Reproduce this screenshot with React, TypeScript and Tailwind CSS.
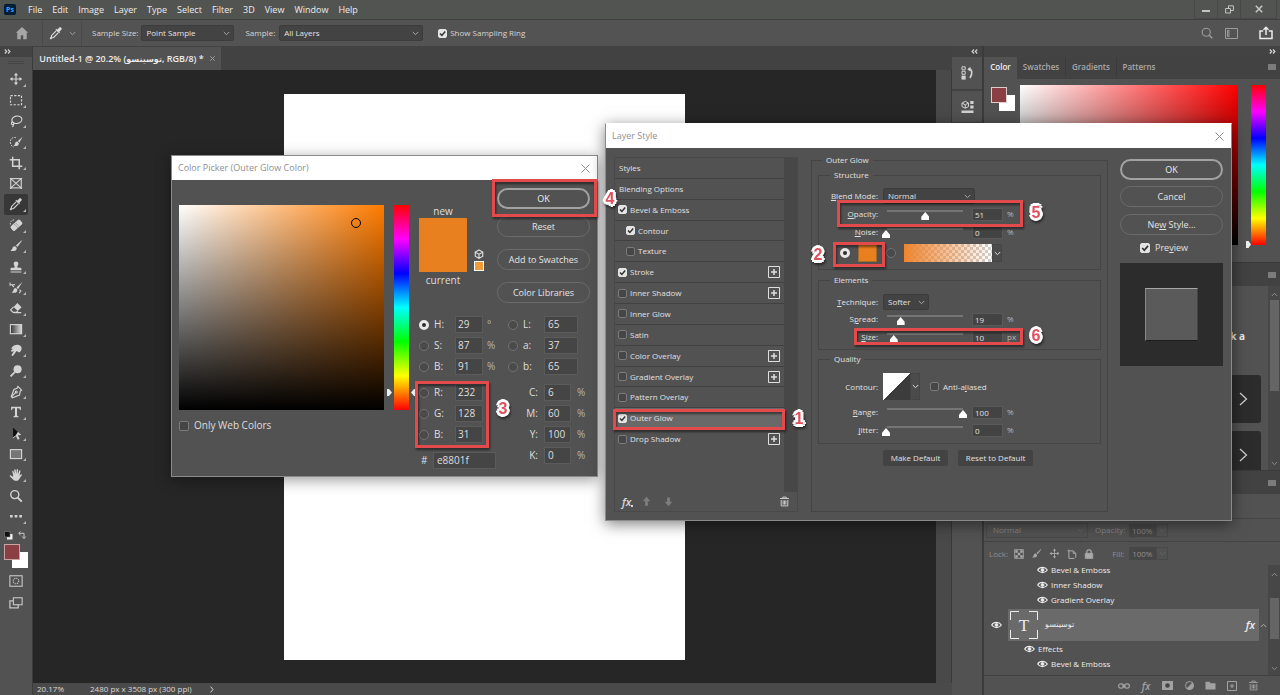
import React from "react";

type Kids = { children?: React.ReactNode };

/* ---------- small drawing helpers ---------- */

function Ico({ size = 16, children, className = "" }: { size?: number; className?: string } & Kids) {
  return (
    <svg
      width={size}
      height={size}
      viewBox="0 0 16 16"
      fill="none"
      stroke="currentColor"
      strokeWidth="1.3"
      aria-hidden="true"
      className={"shrink-0 " + className}
    >
      {children}
    </svg>
  );
}

const dropper = (
  <>
    <path d="M9.3 4.2 11.6 1.9c.7-.7 1.8-.6 2.4 0 .7.7.7 1.8 0 2.4l-2.2 2.3.8.8-1 1-4.2-4.2 1-1z" fill="currentColor" stroke="none" />
    <path d="M8.2 5.6 3 10.8l-.4 1.9-1 1.2.6.6 1.2-1 1.9-.4 5.2-5.2" />
  </>
);
const brush = (
  <>
    <path d="M14.4 1.4 8 7.4l1.6 1.8 5.2-7.2z" fill="currentColor" stroke="none" />
    <path d="M7.2 8.2c-1.6-.2-2.8.6-3.2 2.2-.3 1.2-.9 2.2-2.4 2.9 2.6 1 7.4.8 7.3-3.1z" fill="currentColor" stroke="none" />
  </>
);
const moveShape = (
  <>
    <path d="M8 2.5v11M2.5 8h11" />
    <path d="M8 .8 10.4 4H5.6zM8 15.2 5.6 12h4.8zM.8 8 4 5.6v4.8zM15.2 8 12 10.4V5.6z" fill="currentColor" stroke="none" />
  </>
);

const tools: { name: string; art: React.ReactNode; corner?: boolean; active?: boolean }[] = [
  { name: "Move", corner: true, art: moveShape },
  { name: "Rectangular Marquee", corner: true, art: <rect x="1.7" y="3" width="12.6" height="10.4" strokeDasharray="2.6 1.6" /> },
  {
    name: "Lasso",
    corner: true,
    art: (
      <>
        <ellipse cx="9" cy="6.6" rx="5.8" ry="4.2" transform="rotate(-12 9 6.6)" />
        <circle cx="4.2" cy="10.6" r="1.5" />
        <path d="M4.6 12c.6 1 .2 2.2-.8 2.8" />
      </>
    ),
  },
  {
    name: "Quick Selection",
    corner: true,
    art: (
      <>
        <path d="M8 3.2C5 1.600 1.500 4 1.500 7.800c0 3 1.400 5.400 4 5.900" strokeDasharray="2 1.300" strokeWidth="1.100" />
        <path d="M15.600 2 10.200 6.800l1.600 2zM9.600 7.400c-1.800 0-2.500 1.100-2.700 2.500-.2 1.100-.8 1.900-1.900 2.400 2.400.9 6.400.5 6.200-3z" fill="currentColor" stroke="none" />
      </>
    ),
  },
  { name: "Crop", corner: true, art: <path d="M4.200.8v10.800h11M.8 4.200h10.900v11" strokeWidth="1.700" /> },
  { name: "Frame", art: <><rect x="2" y="3" width="12" height="10.600" /><path d="m2 3 12 10.600M14 3 2 13.600" /><path d="M1 2.800h2M13 2.800h2M1 13.800h2M13 13.800h2" /></> },
  { name: "Eyedropper", corner: true, active: true, art: dropper },
  {
    name: "Spot Healing Brush",
    corner: true,
    art: (
      <>
        <rect x="1.500" y="4.900" width="14" height="6.800" rx="1.800" transform="rotate(-42 8.500 8.300)" fill="currentColor" stroke="none" />
        <path d="M6.400 7.300 9.600 10.800M8 6l3.200 3.400" stroke="#535353" strokeWidth=".9" strokeDasharray="1 .9" />
        <path d="M1.500 7.500C1 4.200 3.600 1.600 7 2.200" strokeDasharray="1.800 1.200" strokeWidth="1" />
      </>
    ),
  },
  { name: "Brush", corner: true, art: brush },
  {
    name: "Clone Stamp",
    corner: true,
    art: <path d="M8 1.600a2.700 2.700 0 0 1 2.300 4.100c-.7 1.200-.8 2.200-.6 3.100H13c.9 0 1.200.6 1.200 1.400v1.600H1.800v-1.600c0-.8.3-1.400 1.200-1.400h3.300c.2-.9.1-1.900-.6-3.100A2.700 2.700 0 0 1 8 1.600zM1.800 13h12.400v1.400H1.800z" fill="currentColor" stroke="none" />,
  },
  {
    name: "History Brush",
    corner: true,
    art: (
      <>
        <path d="M15.200 1 8.600 7.300l1.700 2zM8 8c-1.700 0-2.500 1-2.800 2.400-.3 1.100-1 2.100-2.200 2.700 2.700.9 6.800.5 6.600-3.100z" fill="currentColor" stroke="none" />
        <path d="M1 4.200h6M1.200 1.800v3.600M3 4.200 5.800 7M12 9.800l1.600 1.600-2 2.400" strokeWidth="1.200" />
      </>
    ),
  },
  {
    name: "Eraser",
    corner: true,
    art: (
      <>
        <path d="M9.600 2.400 14.400 7 10 11.400 5.200 6.800z" fill="currentColor" stroke="none" />
        <path d="M5.200 6.800 1.800 10.200 4.800 13H8.400L10 11.400M6 13.300h8" />
      </>
    ),
  },
  {
    name: "Gradient",
    corner: true,
    art: (
      <>
        <defs>
          <linearGradient id="toolGradient">
            <stop offset="0" stopColor="#333" />
            <stop offset="1" stopColor="#ddd" />
          </linearGradient>
        </defs>
        <rect x="1.600" y="3" width="12.800" height="10.400" fill="url(#toolGradient)" />
      </>
    ),
  },
  {
    name: "Smudge",
    corner: true,
    art: <path d="M3 5.400C4.600 2.600 7.400 1.700 10.400 2c2.600.3 4 1.800 4 4.200 0 2.200-1.100 3.800-3 4.600L8.800 9 4.800 14.400c-.8.9-2.200 0-1.700-1.100L5.600 9 3.400 10c-1 .2-1.500-.9-.8-1.600L5 6.300l-1.500.5c-.8 0-.9-.8-.5-1.400z" fill="currentColor" stroke="none" />,
  },
  {
    name: "Dodge",
    corner: true,
    art: (
      <>
        <circle cx="9.800" cy="6" r="4.600" fill="currentColor" stroke="none" />
        <path d="M6.600 9.200 1.800 14.200" strokeWidth="1.900" />
      </>
    ),
  },
  {
    name: "Pen",
    corner: true,
    art: (
      <>
        <path d="m10.200 1.600 4.200 4.200-1.500 1.100-.9 4.500-8.200 3.200-1.200-1.200 3-8.300 3.700-1.400z" />
        <path d="m2.800 13.600 4.600-4.800" />
        <circle cx="8.300" cy="8" r="1.100" />
      </>
    ),
  },
  {
    name: "Type",
    corner: true,
    art: <path d="M2.400 2h11.200v3.600h-1.200c-.1-1.300-.5-1.800-1.700-1.800H9.200v8c0 .8.400 1 1.600 1.100V14H5.200v-1.100c1.200-.1 1.600-.3 1.600-1.100v-8H5.300c-1.200 0-1.600.5-1.700 1.800H2.400z" fill="currentColor" stroke="none" />,
  },
  {
    name: "Path Selection",
    corner: true,
    art: (
      <>
        <path d="M4.500 1 14 10.200l-4 .4 2.100 4-2.100 1-2-4.200-3.500 2.800z" fill="currentColor" stroke="none" />
        <path d="M4.500 1v12.200l3.200-2.600 2.600-3.900z" fill="#111" stroke="none" />
      </>
    ),
  },
  { name: "Rectangle", corner: true, art: <rect x="1.600" y="3" width="12.800" height="10.200" fill="#767576" /> },
  {
    name: "Hand",
    corner: true,
    art: <path d="M4.900 8.900 3.700 4.100c-.2-1 1.100-1.300 1.400-.4l1.200 3.400L6 2.200c0-1 1.400-1.100 1.600-.1l.7 4.700.5-5c.1-.9 1.500-.9 1.500.1l-.1 5.200 1.500-3.900c.4-.9 1.600-.5 1.400.4l-1.200 5.200 1.500-1.500c.9-.7 1.800.2 1.200 1l-3.500 5c-.7.9-1.500 1.400-2.900 1.400-1.800 0-2.900-.5-3.900-1.800L.9 9.300C.4 8.500 1.400 7.800 2.100 8.400l1.900 1.700z" fill="currentColor" stroke="none" />,
  },
  {
    name: "Zoom",
    art: (
      <>
        <circle cx="6.600" cy="6.400" r="4.600" strokeWidth="1.600" />
        <path d="m10 9.800 4.600 4.600" strokeWidth="2.200" />
      </>
    ),
  },
  {
    name: "Edit Toolbar",
    corner: true,
    art: <path d="M1.200 6.800h3v3h-3zM6.500 6.800h3v3h-3zM11.800 6.800h3v3h-3z" fill="currentColor" stroke="none" />,
  },
];

function Chevron({ className = "" }: { className?: string }) {
  return (
    <svg width="7" height="5" viewBox="0 0 7 5" fill="none" stroke="currentColor" aria-hidden="true" className={"shrink-0 " + className}>
      <path d="M.8 1 3.500 3.700 6.200 1" />
    </svg>
  );
}

function DoubleChevron({ flip = false }: { flip?: boolean }) {
  return (
    <svg width="7" height="5" viewBox="0 0 7 5" fill="none" stroke="currentColor" strokeWidth="1.200" aria-hidden="true" className={flip ? "rotate-180" : ""}>
      <path d="M.8.5 2.700 2.500.8 4.500M4 .5l1.900 2L4 4.500" />
    </svg>
  );
}

function Burger() {
  return (
    <button aria-label="Panel menu" className="flex h-3 w-4 items-center justify-center text-[#b4b4b4]">
      <svg width="8" height="6" viewBox="0 0 8 6" stroke="currentColor" aria-hidden="true">
        <path d="M0 1h8M0 3h8M0 5h8" strokeWidth="1" />
      </svg>
    </button>
  );
}

function Trash({ size = 12 }: { size?: number }) {
  return (
    <Ico size={size}>
      <path d="M1.500 3.600h13M5.500 3.400V1.600h5v1.800M3.200 5.800v8.600h9.600V5.800M6 6.500v6M8 6.500v6M10 6.500v6" />
    </Ico>
  );
}

function Fx({ size = "text-[12px]" }: { size?: string }) {
  return <span className={"font-['Open_Sans',sans-serif] leading-none font-semibold italic " + size}>fx</span>;
}

/* ---------- form controls ---------- */

function Tick({ id, checked = false, big = false }: { id: string; checked?: boolean; big?: boolean }) {
  return (
    <span className={big ? "relative flex size-[10px] shrink-0" : "relative flex size-[9px] shrink-0"}>
      <input
        id={id}
        type="checkbox"
        defaultChecked={checked}
        className="peer size-full appearance-none rounded-[2px] border border-[#7c7b7c] bg-[#474647] checked:border-[#e4e4e4] checked:bg-[#e4e4e4]"
      />
      <svg viewBox="0 0 10 10" className="pointer-events-none absolute inset-0 hidden size-full peer-checked:block" fill="none" stroke="#333" strokeWidth="1.700" aria-hidden="true">
        <path d="M2.200 5 4.300 7.200 8 2.900" />
      </svg>
    </span>
  );
}

function Radio({ name, label, checked = false }: { name: string; label: string; checked?: boolean }) {
  return (
    <input
      type="radio"
      name={name}
      aria-label={label}
      defaultChecked={checked}
      className="size-[10px] shrink-0 appearance-none rounded-full border border-[#737273] bg-[#4b4a4b] checked:border-[3px] checked:border-[#e8e8e8] checked:bg-[#2c2c2c]"
    />
  );
}

function Select({ label, value, className }: { label: string; value: string; className: string }) {
  return (
    <span className={"relative flex h-4 items-center " + className}>
      <select aria-label={label} defaultValue={value} className="size-full appearance-none rounded-[2px] border border-[#3d3c3d] bg-[#444344] pr-3 pl-1 text-[#e2e2e2]">
        <option>{value}</option>
      </select>
      <Chevron className="pointer-events-none absolute right-1 text-[#a8a8a8]" />
    </span>
  );
}

function Underlined({ text, at }: { text: string; at: number }) {
  return (
    <>
      {text.slice(0, at)}
      <span className="underline">{text[at]}</span>
      {text.slice(at + 1)}
    </>
  );
}

/* ---------- application frame ---------- */

function MenuBar() {
  const items = ["File", "Edit", "Image", "Layer", "Type", "Select", "Filter", "3D", "View", "Window", "Help"];
  return (
    <header className="flex h-[19px] shrink-0 items-center bg-[#525452] pr-[3px] pl-1 text-[9px] text-[#ececec]">
      <span className="mr-3 flex h-[11px] w-3 items-center justify-center rounded-[2px] bg-[#001e36] text-[7px] leading-none font-bold text-[#31a8ff]">Ps</span>
      <nav className="flex flex-1 items-center gap-[10px]">
        {items.map((m) => (
          <button key={m}>{m}</button>
        ))}
      </nav>
      <div className="flex h-full text-[#c4c4c4]">
        <button aria-label="Minimize" className="flex w-6 items-center justify-center border-x border-b border-[#474847]">
          <svg width="8" height="8" viewBox="0 0 8 8"><path d="M0 5h8v2H0z" fill="currentColor" /></svg>
        </button>
        <button aria-label="Restore" className="flex w-[22px] items-center justify-center border-b border-[#474847]">
          <svg width="9" height="9" viewBox="0 0 9 9" fill="none" stroke="currentColor"><path d="M.6 3.500h4.900v4.500H.6zM3.500 3.400V.8h4.900v4.700H5.600" /></svg>
        </button>
        <button aria-label="Close" className="flex w-[37px] items-center justify-center border-x border-b border-[#474847]">
          <svg width="8" height="8" viewBox="0 0 8 8" stroke="currentColor" strokeWidth="1.600"><path d="m.8.8 6.400 6.400M7.200.8.8 7.200" /></svg>
        </button>
      </div>
    </header>
  );
}

function OptionsBar() {
  return (
    <div className="flex h-[27px] shrink-0 items-center border-t border-[#404040] bg-[#535353] text-[8px] text-[#d6d6d6]">
      <button aria-label="Home" className="flex w-[42px] justify-center pl-[2px] text-[#a6a6a6]">
        <Ico size={14}>
          <path d="M8 1 1 7.600h1.600V15h4v-4.500h2.800V15h4V7.600H15z" fill="currentColor" stroke="none" />
        </Ico>
      </button>
      <button aria-label="Eyedropper presets" className="flex h-full w-10 items-center justify-center gap-[6px] border-x border-[#4a4a4a] text-[#e0e0e0]">
        <Ico size={14}>{dropper}</Ico>
        <Chevron className="text-[#a0a0a0]" />
      </button>
      <span className="ml-[10px]">Sample Size:</span>
      <Select label="Sample Size" value="Point Sample" className="ml-[3px] w-[93px]" />
      <span className="ml-[11px]">Sample:</span>
      <Select label="Sample" value="All Layers" className="ml-1 w-[144px]" />
      <span className="ml-[15px] flex items-center gap-[3px]">
        <Tick id="ring" checked />
        <label htmlFor="ring">Show Sampling Ring</label>
      </span>
      <div className="ml-auto flex items-center gap-3 pr-[7px] text-[#9c9c9c]">
        <button aria-label="Search">
          <Ico size={12}><circle cx="7" cy="7" r="5.400" strokeWidth="1.500" /><path d="m11 11 4 4" strokeWidth="2" /></Ico>
        </button>
        <button aria-label="Workspace">
          <svg width="13" height="11" viewBox="0 0 13 11" fill="none" stroke="currentColor"><path d="M.5.5h12v10H.5z" /><path d="M2.500 2.500h1.500v6H2.500z" /></svg>
        </button>
        <button aria-label="Share" className="ml-[9px] text-[#ececec]">
          <svg width="14" height="14" viewBox="0 0 14 14" fill="none" stroke="currentColor" strokeWidth="1.500"><path d="M4.200 5H1v7.600h12V5H9.800M7 9V1.500M4.500 3.700 7 1.300l2.500 2.400" /></svg>
        </button>
      </div>
    </div>
  );
}

function ToolColumn() {
  return (
    <aside className="flex w-[33px] shrink-0 flex-col border-r border-[#3c3b3c] bg-[#535253]">
      <div className="flex h-[11px] shrink-0 items-center bg-[#434343] pl-1 text-[#d0d0d0]">
        <DoubleChevron />
      </div>
      <div className="mx-2 mt-1 h-[3px] shrink-0 border-y border-[#474647]" />
      <div className="mt-[5px] flex h-[458px] shrink-0 flex-col text-[#d4d4d4]">
        {tools.map((t) => (
          <button
            key={t.name}
            aria-label={t.name}
            className={
              t.active
                ? "relative ml-1 flex w-6 flex-1 items-center justify-center rounded-[2px] bg-[#383738]"
                : "relative ml-1 flex w-6 flex-1 items-center justify-center"
            }
          >
            <Ico size={14}>{t.art}</Ico>
            {t.corner && (
              <svg width="3" height="3" viewBox="0 0 3 3" className="absolute right-[2px] bottom-[3px]" aria-hidden="true">
                <path d="M3 0v3H0z" fill="#b8b8b8" />
              </svg>
            )}
          </button>
        ))}
      </div>
      <div className="mt-1 flex items-center gap-[5px] pl-1">
        <svg width="9" height="9" viewBox="0 0 9 9"><path d="M3 3h5.500v5.500H3z" fill="#eee" /><path d="M.5.5H6V6H.5z" fill="#111" stroke="#888" strokeWidth=".6" /></svg>
        <svg width="8" height="9" viewBox="0 0 8 9" fill="none" stroke="#c8c8c8"><path d="M1 2.300h5v4.500M2.500.5.700 2.300l1.800 1.800M4.200 5.500 6 7.700l1.700-2.200" /></svg>
      </div>
      <div className="mt-1 ml-1 grid h-6 w-6 grid-cols-6 grid-rows-6">
        <span className="col-[3/7] row-[3/7] bg-white" />
        <span className="col-[1/5] row-[1/5] border border-[#c9a5a6] bg-[#8a3f44]" />
      </div>
      <div className="mt-[6px] ml-1 flex w-6 flex-col items-center gap-2 text-[#c4c4c4]">
        <button aria-label="Quick Mask">
          <Ico size={14}><rect x="1" y="2" width="14" height="12" /><circle cx="8" cy="8" r="3.200" strokeDasharray="1.500 1" /></Ico>
        </button>
        <button aria-label="Screen Mode">
          <Ico size={14}><rect x="5" y="2" width="10" height="8" /><path d="M5 5.500H1V13.500h9.500V10" strokeWidth="1.500" /></Ico>
        </button>
      </div>
    </aside>
  );
}

function DocumentArea() {
  return (
    <main className="flex min-w-0 flex-1 flex-col bg-[#424242]">
      <div className="flex h-6 shrink-0 items-stretch">
        <div className="mt-px flex w-[188px] items-center justify-center gap-[6px] bg-[#535253] text-[9px] font-semibold whitespace-nowrap text-[#ececec]">
          <span>
            Untitled-1 @ 20.2% (<bdi className="font-['DejaVu_Sans',sans-serif] text-[8px]">توسینسو</bdi>, RGB/8) *
          </span>
          <button aria-label="Close document" className="text-[#a0a0a0]">
            <svg width="5" height="5" viewBox="0 0 5 5" stroke="currentColor"><path d="m.3.3 4.400 4.400M4.700.3.300 4.700" /></svg>
          </button>
        </div>
      </div>
      <div className="flex min-h-0 flex-1">
        <div className="flex min-w-0 flex-1 items-center justify-center overflow-hidden bg-[#272627]">
          <div className="h-[566px] w-[401px] shrink-0 bg-white" />
        </div>
        <div className="w-4 shrink-0 border-r border-[#3a393a] bg-[#4a494a]" />
      </div>
      <footer className="flex h-3 shrink-0 items-center bg-[#4b4a4b] text-[8px] leading-none text-[#d8d8d8]">
        <span className="ml-1 w-[53px]">20.17%</span>
        <span>2480 px x 3508 px (300 ppi)</span>
        <svg width="4" height="7" viewBox="0 0 4 7" fill="none" stroke="currentColor" className="ml-[18px]" aria-hidden="true"><path d="M.6.600 3 3.500.6 6.400" /></svg>
      </footer>
    </main>
  );
}

function IconDock() {
  return (
    <aside className="flex w-[32px] shrink-0 flex-col border-r-2 border-[#3c3b3c] bg-[#535253] text-[#d2d2d2]">
      <div className="flex h-[11px] items-center justify-end bg-[#434343] pr-1">
        <DoubleChevron flip />
      </div>
      <button aria-label="History" className="flex h-[34px] items-center justify-center border-b-2 border-[#434243]">
        <svg width="13" height="14" viewBox="0 0 13 14" fill="none" stroke="currentColor" aria-hidden="true">
          <path d="M1 .8h3.200v3H1zM1 5.300h3.200v3H1z" /><path d="M.5 9.600h4.200v4H.5z" fill="currentColor" stroke="none" /><path d="M7.500 2.500c3.500.5 4.600 4.500 1.500 9.500" strokeWidth="1.600" /><path d="M6.300 3.500 9.500.8v4.700z" fill="currentColor" stroke="none" />
        </svg>
      </button>
      <button aria-label="Libraries" className="flex h-[33px] items-center justify-center border-b-2 border-[#434243]">
        <svg width="13" height="14" viewBox="0 0 13 14" fill="none" stroke="currentColor" aria-hidden="true">
          <path d="M4.300 1.300 7.500 3v3.500L4.300 8.300 1 6.500V3zM1.200 3.200l3.100 1.600 3-1.600M4.300 4.800v3.200" /><path d="M9.300 1H12.500v3H9.300zM9.300 5.500H12.500v3H9.300zM.5 10.500h12v2.400H.5z" fill="currentColor" stroke="none" />
        </svg>
      </button>
    </aside>
  );
}

function Eye() {
  return (
    <svg width="11" height="8" viewBox="0 0 11 8" fill="none" stroke="#ececec" className="shrink-0" aria-hidden="true">
      <path d="M.7 4C2.800.6 8.200.6 10.300 4 8.200 7.400 2.800 7.400.700 4z" strokeWidth="1.200" />
      <circle cx="5.500" cy="4" r="1.400" fill="#ececec" />
    </svg>
  );
}

function EffectRow({ name, deep = true }: { name: string; deep?: boolean }) {
  return (
    <div className={deep ? "flex h-[15px] items-center gap-[3px] pl-[53px]" : "flex h-[15px] items-center gap-[3px] pl-[40px]"}>
      <Eye />
      <span>{name}</span>
    </div>
  );
}

function Scroll({ pad, thumb }: { pad: string; thumb: string }) {
  return (
    <div className={"flex w-3 shrink-0 flex-col items-center bg-[#484748] text-[#8c8c8c] " + pad}>
      <Chevron className="rotate-180" />
      <span className={"w-[9px] bg-[#666566] " + thumb} />
      <Chevron className="mt-auto" />
    </div>
  );
}

const hueBar = "bg-[linear-gradient(to_bottom,#f00,#f0f,#00f,#0ff,#0f0,#ff0,#f00)]";

function Panels() {
  return (
    <aside className="flex w-[296px] shrink-0 flex-col bg-[#535253] text-[8px] text-[#dcdcdc]">
      <div className="flex h-[11px] shrink-0 items-center justify-end bg-[#434343] pr-1">
        <DoubleChevron />
      </div>
      <div className="flex h-[22px] shrink-0 items-stretch bg-[#434243] pb-[2px] font-semibold text-[#a8a8a8]">
        <button className="-mb-[2px] w-[33px] bg-[#535253] pb-[2px] text-[#f0f0f0]">Color</button>
        <button className="w-[49px] border-r border-[#3b3a3b]">Swatches</button>
        <button className="w-[51px] border-r border-[#3b3a3b]">Gradients</button>
        <button className="w-[44px]">Patterns</button>
        <span className="ml-auto flex items-center"><Burger /></span>
      </div>
      <div className="flex h-[183px] shrink-0 pt-[6px] pl-[7px]">
        <div className="mt-[2px] grid h-6 w-6 grid-cols-6 grid-rows-6">
          <span className="col-[3/7] row-[3/7] bg-white" />
          <span className="col-[1/5] row-[1/5] border border-[#dcc] bg-[#8a3f44]" />
        </div>
        <div className="ml-[5px] h-40 w-[218px] bg-[linear-gradient(to_top,#000,transparent),linear-gradient(to_right,#fff,#f00)]" />
        <svg width="5" height="7" viewBox="0 0 5 7" className="mt-[156px] ml-2" aria-hidden="true"><path d="M0 0h2.500L5 3.500 2.500 7H0z" fill="#eee" /></svg>
        <div className={"h-40 w-[15px] " + hueBar} />
      </div>

      <div className="flex h-6 shrink-0 items-center justify-end border-t border-[#3b3a3b] bg-[#434243]"><Burger /></div>
      <div className="flex h-[184px] shrink-0 justify-end">
        <div className="flex flex-1 flex-col items-end overflow-hidden pr-[7px]">
          <p className="mt-[43px] mr-4 text-[10px] leading-[14px] font-bold text-[#ececec]">k a</p>
          {[0, 1].map((i) => (
            <button key={i} aria-label="Open card" className="mt-8 flex h-12 w-20 shrink-0 items-center justify-end rounded-[3px] bg-[#2d2c2d] pr-[13px] not-first-of-type:mt-2">
              <svg width="9" height="14" viewBox="0 0 9 14" fill="none" stroke="#d4d4d4" strokeWidth="1.200"><path d="m1 1 6.500 6L1 13" /></svg>
            </button>
          ))}
        </div>
        <Scroll pad="pt-[6px] pb-1" thumb="mt-[3px] h-[91px]" />
      </div>

      <div className="flex h-6 shrink-0 items-center justify-end border-t border-[#3b3a3b] bg-[#434243]"><Burger /></div>
      <div className="h-[25px] shrink-0 border-b border-[#454445]" />
      <div className="flex h-[23px] shrink-0 items-center border-b border-[#454445] pl-[2px] text-[#858485]">
        <span className="relative flex h-[15px] w-[102px] items-center">
          <select aria-label="Layer blend mode" defaultValue="Normal" className="size-full appearance-none border border-[#4a494a] pl-[6px] text-[#858485]"><option>Normal</option></select>
          <Chevron className="pointer-events-none absolute right-1 text-[#676667]" />
        </span>
        <label htmlFor="layerOpacity" className="ml-[7px] w-[34px]">Opacity:</label>
        <input id="layerOpacity" defaultValue="100%" className="h-[13px] w-[27px] bg-[#474647] pl-[3px] leading-[13px]" />
        <span className="flex h-[13px] w-3 items-center justify-center border border-[#4a494a]"><Chevron className="text-[#676667]" /></span>
      </div>
      <div className="flex h-[23px] shrink-0 items-center pl-[5px] text-[#8f8e8f]">
        <span>Lock:</span>
        <div className="ml-[6px] flex items-center gap-[7px] text-[#aaa9aa]">
          <Ico size={10}><path d="M1 1h14v14H1z" /><path d="M2 2h4v4H2zM10 2h4v4h-4zM6 6h4v4H6zM2 10h4v4H2zM10 10h4v4h-4z" fill="currentColor" stroke="none" /></Ico>
          <Ico size={11}>{brush}</Ico>
          <Ico size={11}>{moveShape}</Ico>
          <Ico size={10}><path d="M1 3h9l4 4v7M3 1v14h9M10 3v4h4" strokeWidth="1.600" /></Ico>
          <Ico size={10}><path d="M2 7h12v8H2z" fill="currentColor" /><path d="M4.500 7V4.500c0-4 7-4 7 0V7" strokeWidth="2" /></Ico>
        </div>
        <label htmlFor="layerFill" className="ml-[18px] w-[17px]">Fill:</label>
        <input id="layerFill" defaultValue="100%" className="h-[13px] w-[27px] bg-[#474647] pl-[3px] leading-[13px]" />
        <span className="flex h-[13px] w-3 items-center justify-center border border-[#4a494a]"><Chevron className="text-[#676667]" /></span>
      </div>

      <div className="flex min-h-0 flex-1 border-b border-[#424142]">
        <div className="min-w-0 flex-1 overflow-hidden text-[#ececec]">
          <div className="-mt-[3px]">
            <EffectRow name="Bevel &amp; Emboss" />
            <EffectRow name="Inner Shadow" />
            <EffectRow name="Gradient Overlay" />
          </div>
          <div className="mt-[2px] flex h-8 items-center">
            <span className="flex w-6 justify-center"><Eye /></span>
            <div className="flex h-full flex-1 items-center bg-[#6b6a6b] pl-[2px]">
              <span className="relative flex size-7 items-center justify-center font-['Liberation_Serif',serif] text-[17px] leading-none">
                <svg viewBox="0 0 28 28" className="absolute inset-0 size-full" fill="none" stroke="#eee" aria-hidden="true"><path d="M.5 9V.5H9M19 .5h8.500V9M27.500 19v8.500H19M9 27.500H.5V19" /></svg>
                T
              </span>
              <bdi className="ml-[7px] font-['DejaVu_Sans',sans-serif] text-[8px]">توسینسو</bdi>
              <span className="mr-1 ml-auto"><Fx size="text-[11px]" /></span>
            </div>
            <span className="flex w-[9px] justify-center"><Chevron className="rotate-180 text-[#aaa]" /></span>
          </div>
          <EffectRow name="Effects" deep={false} />
          <EffectRow name="Bevel &amp; Emboss" />
        </div>
        <Scroll pad="pt-[7px] pb-1" thumb="mt-[21px] h-[41px]" />
      </div>
      <div className="flex h-[19px] shrink-0 items-center justify-end pr-4 text-[#a2a1a2]">
        <button aria-label="Link layers" className="flex w-[22px] justify-center"><svg width="12" height="6" viewBox="0 0 12 6" fill="none" stroke="currentColor" strokeWidth="1.200"><rect x=".6" y=".8" width="5" height="4.400" rx="2.200" /><rect x="6.400" y=".8" width="5" height="4.400" rx="2.200" /><path d="M4 3h4" /></svg></button>
        <button aria-label="Layer effects" className="flex w-[22px] justify-center"><Fx size="text-[10px]" /></button>
        <button aria-label="Add mask" className="flex w-[21px] justify-center"><svg width="11" height="9" viewBox="0 0 11 9"><path d="M0 0h11v9H0z" fill="currentColor" /><circle cx="5.500" cy="4.500" r="2.300" fill="#444" /></svg></button>
        <button aria-label="Adjustment layer" className="flex w-[22px] justify-center"><svg width="9" height="9" viewBox="0 0 9 9"><circle cx="4.500" cy="4.500" r="4" fill="none" stroke="currentColor" /><path d="M7.500 1.500A4.200 4.200 0 0 1 1.500 7.500z" fill="currentColor" /></svg></button>
        <button aria-label="New group" className="flex w-[21px] justify-center"><svg width="11" height="9" viewBox="0 0 11 9"><path d="M.5.8h4l1 1.400h5V8.500H.5z" fill="currentColor" /></svg></button>
        <button aria-label="New layer" className="flex w-[22px] justify-center"><svg width="10" height="10" viewBox="0 0 10 10" fill="none" stroke="currentColor"><path d="M.5.5h9v9h-9zM5 3v4M3 5h4" /></svg></button>
        <button aria-label="Delete layer" className="flex w-[21px] justify-center"><Trash size={11} /></button>
      </div>
    </aside>
  );
}

/* ---------- dialogs ---------- */

function TitleBar({ title }: { title: string }) {
  return (
    <div className="flex h-6 shrink-0 items-center justify-between bg-white pr-[7px] pl-[6px] text-[9px] text-[#8f8f93]">
      <h2>{title}</h2>
      <button aria-label="Close">
        <svg width="9" height="9" viewBox="0 0 9 9" stroke="#8f8f93"><path d="m.5.5 8 8M8.500.5l-8 8" /></svg>
      </button>
    </div>
  );
}

function Pill({ strong = false, children }: { strong?: boolean } & Kids) {
  return (
    <button
      className={
        strong
          ? "flex h-[21px] w-full items-center justify-center rounded-full border-2 border-[#a3a2a3] text-[9px] text-[#ececec]"
          : "flex h-[21px] w-full items-center justify-center rounded-full border border-[#6c6b6c] text-[9px] text-[#e4e4e4]"
      }
    >
      {children}
    </button>
  );
}

function ColorField({ label, value, unit = "", checked = false }: { label: string; value: string; unit?: string; checked?: boolean }) {
  return (
    <div className="flex h-[17px] items-center">
      <span className="flex w-[15px] shrink-0"><Radio name="channel" label={label} checked={checked} /></span>
      <span className="w-[21px] shrink-0">{label}:</span>
      <input aria-label={label} defaultValue={value} className="h-[17px] w-[28px] border border-[#5c5b5c] bg-[#464546] pl-[2px]" />
      <span className="ml-1 text-[#b4b4b4]">{unit}</span>
    </div>
  );
}

function RightField({ label, value, unit, radio = false }: { label: string; value: string; unit?: string; radio?: boolean }) {
  return (
    <div className="flex h-[17px] items-center">
      {radio && <Radio name="channel" label={label} />}
      <span className={radio ? "ml-[5px] w-[21px]" : "mr-[6px] w-[30px] text-right"}>{label}:</span>
      <input
        aria-label={label}
        defaultValue={value}
        className={radio ? "h-[17px] w-[34px] border border-[#5c5b5c] bg-[#464546] pl-[3px]" : "h-[17px] w-[27px] border border-[#5c5b5c] bg-[#464546] pl-[3px]"}
      />
      {unit && <span className="ml-[6px] text-[#b4b4b4]">{unit}</span>}
    </div>
  );
}

function ColorPicker() {
  return (
    <section aria-label="Color Picker" className="absolute top-[155px] left-[171px] flex h-[322px] w-[427px] flex-col border border-[#8c8b8c] bg-[#535253] text-[10px] text-[#dedede] shadow-[0_3px_14px_rgba(0,0,0,0.4)]">
      <TitleBar title="Color Picker (Outer Glow Color)" />
      <div className="flex flex-1 pl-[7px]">
        <div className="flex flex-col pt-[25px]">
          <div className="flex">
            <div className="relative size-[205px] bg-[linear-gradient(to_top,#000,transparent),linear-gradient(to_right,#fff,#ff7b00)]">
              <span className="absolute top-[13px] left-[172px] size-[10px] rounded-full border border-black" />
            </div>
            <svg width="5" height="7" viewBox="0 0 5 7" className="mt-[184px] ml-[3px]" aria-hidden="true"><path d="M0 0h2l3 3.500L2 7H0z" fill="#eee" /></svg>
            <div className={"ml-[2px] h-[205px] w-[15px] " + hueBar} />
            <svg width="5" height="7" viewBox="0 0 5 7" className="mt-[184px] ml-[2px]" aria-hidden="true"><path d="M5 0H3L0 3.500 3 7h2z" fill="#eee" /></svg>
          </div>
          <div className="mt-2 flex items-center gap-[5px]">
            <Tick id="webColors" big />
            <label htmlFor="webColors">Only Web Colors</label>
          </div>
        </div>
        <div className="ml-[3px] flex flex-1 flex-col">
          <div className="flex h-[136px]">
            <div className="flex w-12 flex-col items-center pt-[25px]">
              <span className="leading-[13px]">new</span>
              <span className="h-[54px] w-12 bg-[#e8801f]" />
              <span className="mt-[2px] leading-[13px]">current</span>
            </div>
            <div className="ml-[7px] flex w-[10px] flex-col items-center pt-[69px]">
              <Ico size={10}><path d="M8 1.500 14 5v6.500L8 15l-6-3.500V5zM2 5l6 3.500L14 5M8 8.500V15" strokeWidth="1.800" /></Ico>
              <span className="mt-[2px] size-[10px] border border-white bg-[#f29a38]" />
            </div>
            <div className="ml-[13px] w-[93px] pt-2">
              <Pill strong>OK</Pill>
              <div className="mt-[7px]"><Pill>Reset</Pill></div>
              <div className="mt-3"><Pill>Add to Swatches</Pill></div>
              <div className="mt-3"><Pill>Color Libraries</Pill></div>
            </div>
          </div>
          <div className="flex leading-[17px]">
            <div className="flex w-[89px] flex-col gap-[9px]">
              <div className="flex flex-col gap-1">
                <ColorField label="H" value="29" unit="°" checked />
                <ColorField label="S" value="87" unit="%" />
                <ColorField label="B" value="91" unit="%" />
              </div>
              <div className="flex flex-col gap-1">
                <ColorField label="R" value="232" />
                <ColorField label="G" value="128" />
                <ColorField label="B" value="31" />
              </div>
              <div className="flex items-center">
                <label htmlFor="hex" className="w-[14px] pl-[2px]">#</label>
                <input id="hex" defaultValue="e8801f" className="h-[17px] w-[63px] border border-[#5c5b5c] bg-[#464546] pl-[3px]" />
              </div>
            </div>
            <div className="flex flex-col gap-[9px]">
              <div className="flex flex-col gap-1">
                <RightField radio label="L" value="65" />
                <RightField radio label="a" value="37" />
                <RightField radio label="b" value="65" />
              </div>
              <div className="flex flex-col gap-1">
                <RightField label="C" value="6" unit="%" />
                <RightField label="M" value="60" unit="%" />
                <RightField label="Y" value="100" unit="%" />
                <RightField label="K" value="0" unit="%" />
              </div>
            </div>
          </div>
        </div>
      </div>
    </section>
  );
}

const styleRows: { name: string; box?: boolean; on?: boolean; indent?: boolean; plus?: boolean; active?: boolean }[] = [
  { name: "Styles" },
  { name: "Blending Options" },
  { name: "Bevel & Emboss", box: true, on: true },
  { name: "Contour", box: true, on: true, indent: true },
  { name: "Texture", box: true, indent: true },
  { name: "Stroke", box: true, on: true, plus: true },
  { name: "Inner Shadow", box: true, plus: true },
  { name: "Inner Glow", box: true },
  { name: "Satin", box: true },
  { name: "Color Overlay", box: true, plus: true },
  { name: "Gradient Overlay", box: true, plus: true },
  { name: "Pattern Overlay", box: true },
  { name: "Outer Glow", box: true, on: true, active: true },
  { name: "Drop Shadow", box: true, plus: true },
];

function StyleList() {
  return (
    <div className="flex w-[184px] flex-col border border-[#4a494a]">
      <div className="flex flex-1">
        <ul className="flex h-[291px] flex-1 flex-col">
          {styleRows.map((r) => (
            <li
              key={r.name}
              className={
                "flex flex-1 items-center gap-[3px] border-b border-[#424142] pr-1 last:border-b-0 " +
                (r.indent ? "pl-[11px] " : "pl-[3px] ") +
                (r.active ? "bg-[#6a696a]" : "")
              }
            >
              {r.box && <Tick id={"style-" + r.name} checked={r.on} />}
              {r.box ? <label htmlFor={"style-" + r.name}>{r.name}</label> : <button className="pl-px">{r.name}</button>}
              {r.plus && (
                <button aria-label={"Add " + r.name} className="ml-auto">
                  <svg width="12" height="12" viewBox="0 0 12 12" fill="none" stroke="#dedede"><path d="M.5.5h11v11H.5z" /><path d="M6 3v6M3 6h6" strokeWidth="1.500" /></svg>
                </button>
              )}
            </li>
          ))}
        </ul>
        <div className="w-[13px] bg-[#484748]" />
      </div>
      <div className="flex h-[19px] items-center pr-[7px] pl-[7px] text-[#d8d8d8]">
        <button aria-label="Effects menu" className="flex items-end"><Fx size="text-[11px]" /><span className="size-[2px] bg-[#d8d8d8]" /></button>
        <button aria-label="Move effect up" className="ml-2 text-[#7f7e7f]"><Ico size={11}><path d="M8 1 2.500 7.500H6V14h4V7.500h3.500z" fill="currentColor" stroke="none" /></Ico></button>
        <button aria-label="Move effect down" className="ml-[11px] text-[#7f7e7f]"><Ico size={11}><path d="M8 15 2.500 8.500H6V2h4v6.500h3.500z" fill="currentColor" stroke="none" /></Ico></button>
        <button aria-label="Delete effect" className="ml-auto"><Trash size={11} /></button>
      </div>
    </div>
  );
}

function SliderRow({ label, at, value, pos, unit }: { label: string; at: number; value: string; pos: number; unit: string }) {
  const id = "slider-" + label;
  return (
    <div className="flex h-[14px] items-center">
      <label htmlFor={id} className="w-[59px] text-right"><Underlined text={label + ":"} at={at} /></label>
      <input
        id={id}
        type="range"
        defaultValue={pos}
        className="ml-1 h-[14px] w-[85px] appearance-none bg-transparent bg-[linear-gradient(#767576,#767576)] bg-[length:76px_2px] bg-[position:center_3px] bg-no-repeat [&::-webkit-slider-thumb]:mt-[4px] [&::-webkit-slider-thumb]:h-[8px] [&::-webkit-slider-thumb]:w-[8px] [&::-webkit-slider-thumb]:appearance-none [&::-webkit-slider-thumb]:bg-white [&::-webkit-slider-thumb]:[clip-path:polygon(50%_0,100%_60%,100%_100%,0_100%,0_60%)]"
      />
      <input aria-label={label + " value"} defaultValue={value} className="ml-[5px] h-[13px] w-[31px] border border-[#5a595a] bg-[#444344] pl-[2px] leading-[11px]" />
      <span className="ml-1 text-[#b8b8b8]">{unit}</span>
    </div>
  );
}

function Group({ title, className, outer = false, children }: { title: string; className: string; outer?: boolean } & Kids) {
  return (
    <fieldset className={"border border-[#464546] " + className}>
      <legend className={outer ? "ml-1 px-1 leading-[10px]" : "ml-[11px] px-1 leading-[10px]"}>{title}</legend>
      {children}
    </fieldset>
  );
}

function GlowSettings() {
  return (
    <Group outer title="Outer Glow" className="h-[357px] w-[297px] px-[6px]">
      <Group title="Structure" className="mt-[5px] h-[100px]">
        <div className="mt-2 flex h-4 items-center">
          <span className="w-[59px] text-right"><Underlined text="Blend Mode:" at={0} /></span>
          <Select label="Blend Mode" value="Normal" className="ml-[5px] w-[92px]" />
        </div>
        <div className="mt-[3px]"><SliderRow label="Opacity" at={0} value="51" pos={51} unit="%" /></div>
        <div className="mt-1"><SliderRow label="Noise" at={0} value="0" pos={0} unit="%" /></div>
        <div className="mt-[5px] flex h-[18px] items-center pl-[21px]">
          <Radio name="fill" label="Solid color" checked />
          <button aria-label="Glow color" className="ml-2 h-[18px] w-[19px] border border-[#a66a2a] bg-[#e8801f]" />
          <span className="ml-[9px] flex"><Radio name="fill" label="Gradient" /></span>
          <button
            aria-label="Glow gradient"
            className="ml-2 h-[18px] w-[88px] bg-[linear-gradient(to_right,#ee8530,rgba(238,133,48,0)),repeating-conic-gradient(#cfcfcf_0_25%,#fff_0_50%)] bg-[length:100%_100%,6px_6px]"
          />
          <button aria-label="Gradient presets" className="flex h-[18px] w-[10px] items-center justify-center border border-[#464546] bg-[#4c4b4c]"><Chevron /></button>
        </div>
      </Group>
      <Group title="Elements" className="mt-[5px] h-[75px]">
        <div className="mt-[9px] flex h-4 items-center">
          <span className="w-[59px] text-right"><Underlined text="Technique:" at={0} /></span>
          <Select label="Technique" value="Softer" className="ml-[5px] w-[46px]" />
        </div>
        <div className="mt-[2px]"><SliderRow label="Spread" at={1} value="19" pos={19} unit="%" /></div>
        <div className="mt-1"><SliderRow label="Size" at={0} value="10" pos={10} unit="px" /></div>
      </Group>
      <Group title="Quality" className="mt-1 h-[90px]">
        <div className="mt-[9px] flex h-[27px] items-center">
          <span className="w-[59px] text-right">Contour:</span>
          <button aria-label="Contour" className="ml-[5px] size-[27px] bg-[linear-gradient(135deg,#fff_50%,#3d3c3d_50%)]" />
          <button aria-label="Contour presets" className="flex h-[27px] w-[10px] items-center justify-center border border-[#464546] bg-[#4c4b4c]"><Chevron /></button>
          <span className="ml-[10px] flex items-center gap-1">
            <Tick id="aa" />
            <label htmlFor="aa"><Underlined text="Anti-aliased" at={6} /></label>
          </span>
        </div>
        <div className="mt-[5px]"><SliderRow label="Range" at={0} value="100" pos={100} unit="%" /></div>
        <div className="mt-1"><SliderRow label="Jitter" at={0} value="0" pos={0} unit="%" /></div>
      </Group>
      <div className="mt-[6px] flex gap-[10px] pl-[65px]">
        <button className="h-4 w-[65px] rounded-[2px] bg-[#444344]">Make Default</button>
        <button className="h-4 w-[75px] rounded-[2px] bg-[#444344]">Reset to Default</button>
      </div>
    </Group>
  );
}

function LayerStyle() {
  return (
    <section aria-label="Layer Style" className="absolute top-[123px] left-[605px] flex h-[398px] w-[627px] flex-col border border-[#8c8b8c] border-t-white bg-[#535253] text-[8px] text-[#e0e0e0] shadow-[0_3px_14px_rgba(0,0,0,0.5)]">
      <TitleBar title="Layer Style" />
      <div className="flex flex-1 pl-2">
        <div className="flex pt-[9px] pb-2"><StyleList /></div>
        <div className="ml-[13px] pt-[7px]"><GlowSettings /></div>
        <div className="ml-3 flex w-[103px] flex-col pt-[11px]">
          <Pill strong>OK</Pill>
          <div className="mt-[6px]"><Pill>Cancel</Pill></div>
          <div className="mt-[7px]"><Pill><span><Underlined text="New Style..." at={2} /></span></Pill></div>
          <div className="mt-[6px] ml-5 flex items-center gap-[5px] text-[9px]">
            <Tick id="preview" big checked />
            <label htmlFor="preview"><Underlined text="Preview" at={3} /></label>
          </div>
          <div className="mt-2 flex size-[103px] items-center justify-center bg-[#2d2c2d]">
            <span className="size-[53px] border border-t-[#a8a7a8] border-r-[#454445] border-b-[#1c1c1c] border-l-[#8a898a] bg-[#5b5a5b]" />
          </div>
        </div>
      </div>
    </section>
  );
}

/* ---------- tutorial call-outs drawn over the windows ---------- */

const frames = [
  "top-[179px] left-[492px] h-[38px] w-[105px]",
  "top-[381px] left-[415px] h-[67px] w-[74px]",
  "top-[409px] left-[613px] h-[21px] w-[172px]",
  "top-[200px] left-[837px] h-[27px] w-[186px]",
  "top-[242px] left-[833px] h-[25px] w-[52px]",
  "top-[328px] left-[854px] h-[17px] w-[169px]",
];
const marks: [string, string][] = [
  ["1", "top-[409px] left-[789px]"],
  ["2", "top-[245px] left-[808px]"],
  ["3", "top-[399px] left-[493px]"],
  ["4", "top-[189px] left-[600px]"],
  ["5", "top-[203px] left-[1026px]"],
  ["6", "top-[326px] left-[1026px]"],
];

function CallOuts() {
  return (
    <>
      {frames.map((f) => (
        <span key={f} className={"pointer-events-none absolute border-[3px] border-[#e34a4b] drop-shadow-[1px_2px_1px_rgba(0,0,0,0.5)] " + f} />
      ))}
      {marks.map(([n, pos]) => (
        <span
          key={n}
          className={
            "pointer-events-none absolute flex size-5 items-center justify-center font-['Liberation_Sans',Arial,sans-serif] text-[16px] leading-5 font-bold text-[#e0505c] drop-shadow-[1px_2px_1px_rgba(0,0,0,0.5)] [text-shadow:3px_0_#fff,-3px_0_#fff,0_3px_#fff,0_-3px_#fff,2px_2px_#fff,-2px_2px_#fff,2px_-2px_#fff,-2px_-2px_#fff,1px_0_#fff,-1px_0_#fff] " +
            pos
          }
        >
          {n}
        </span>
      ))}
    </>
  );
}

export default function App() {
  return (
    <div className="relative flex h-screen flex-col overflow-hidden bg-[#535253] font-['Open_Sans','Noto_Sans','DejaVu_Sans',sans-serif] select-none">
      <MenuBar />
      <OptionsBar />
      <div className="flex min-h-0 flex-1">
        <ToolColumn />
        <DocumentArea />
        <IconDock />
        <Panels />
      </div>
      <ColorPicker />
      <LayerStyle />
      <CallOuts />
    </div>
  );
}
